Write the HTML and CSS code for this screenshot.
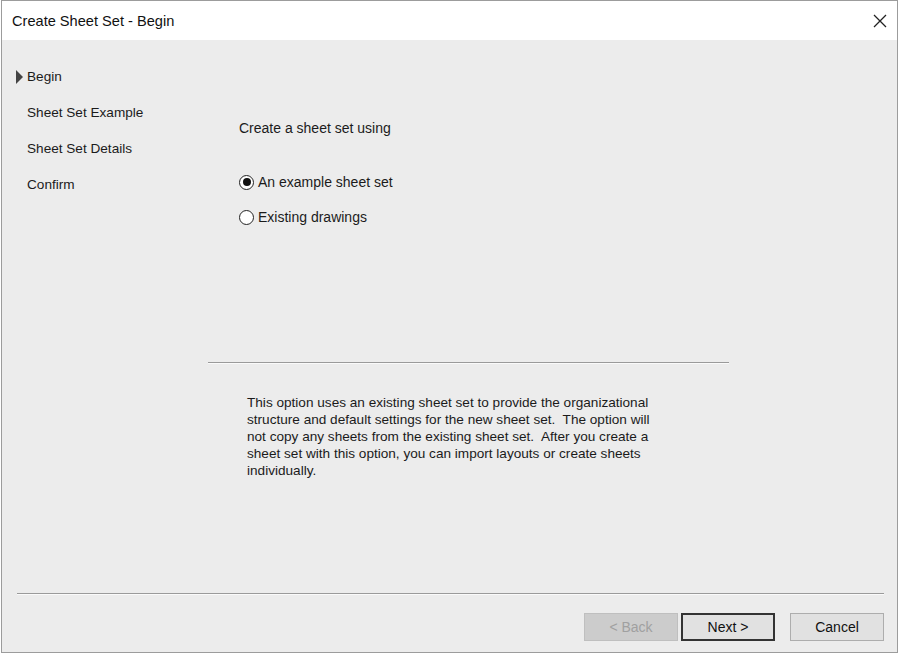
FILE: index.html
```html
<!DOCTYPE html>
<html lang="en">
<head>
  <meta charset="UTF-8">
  <title>Create Sheet Set - Begin</title>
  <link rel="stylesheet" href="styles.css">
</head>
<body>

  <div class="window">
    <!-- Title bar -->
    <div class="titlebar">
      <span class="title">Create Sheet Set - Begin</span>
      <svg class="close" width="14" height="14" viewBox="0 0 14 14">
        <path d="M1 1 L13 13 M13 1 L1 13" stroke="#222" stroke-width="1.3" fill="none"/>
      </svg>
    </div>

    <div class="content">
      <div class="wizard">
        <!-- Step list -->
        <ul class="steps">
          <li class="current"><span class="arrow"></span>Begin</li>
          <li>Sheet Set Example</li>
          <li>Sheet Set Details</li>
          <li>Confirm</li>
        </ul>

        <!-- Page body -->
        <div class="page">
          <div class="options">
            <p class="prompt">Create a sheet set using</p>
            <label class="radio"><span class="dot checked"></span>An example sheet set</label>
            <label class="radio"><span class="dot"></span>Existing drawings</label>
          </div>
          <div class="rule"></div>
          <p class="desc">
            This option uses an existing sheet set to provide the organizational<br>
            structure and default settings for the new sheet set.&nbsp; The option will<br>
            not copy any sheets from the existing sheet set.&nbsp; After you create a<br>
            sheet set with this option, you can import layouts or create sheets<br>
            individually.
          </p>
        </div>
      </div>

      <div class="footer">
        <div class="rule wide"></div>
        <div class="buttons">
          <button class="btn" disabled>&lt; Back</button>
          <button class="btn default">Next &gt;</button>
          <button class="btn cancel">Cancel</button>
        </div>
      </div>
    </div>
  </div>

</body>
</html>
```

FILE: styles.css
```css
body {
  margin: 0;
  background: #fff;
  font-family: "Liberation Sans", Arial, sans-serif;
  color: #1b1b1b;
}
.window {
  margin-left: 1px;
  width: 897px;
  height: 653px;
  box-sizing: border-box;
  border: 1px solid #9c9c9c;
  display: flex;
  flex-direction: column;
}
.titlebar {
  height: 39px;
  background: #fff;
  display: flex;
  align-items: center;
  justify-content: space-between;
  padding: 0 10px 0 10px;
}
.title {
  font-size: 14.6px;
  color: #111;
}
.content {
  flex: 1;
  background: #ececec;
  display: flex;
  flex-direction: column;
}
.wizard {
  flex: 1;
  display: flex;
}
.steps {
  list-style: none;
  margin: 0;
  padding: 19px 0 0 25px;
  width: 181px;
  font-size: 13.6px;
}
.steps li {
  height: 36px;
  line-height: 36px;
  position: relative;
}
.arrow {
  position: absolute;
  left: -11px;
  top: 11px;
  width: 0;
  height: 0;
  border-top: 7px solid transparent;
  border-bottom: 7px solid transparent;
  border-left: 7px solid #444;
}
.page {
  width: 521px;
}
.options {
  padding: 78px 0 0 31px;
  height: 244px;
  font-size: 14px;
}
.prompt {
  margin: 0 0 34px;
  line-height: 20px;
}
.radio {
  display: flex;
  align-items: center;
  height: 20px;
  margin-bottom: 15px;
}
.dot {
  width: 13px;
  height: 13px;
  border: 1.5px solid #222;
  border-radius: 50%;
  margin-right: 4px;
  display: flex;
  align-items: center;
  justify-content: center;
  background: #fff;
}
.dot.checked::after {
  content: "";
  width: 8px;
  height: 8px;
  border-radius: 50%;
  background: #111;
}
.rule {
  border-top: 1px solid #9a9a9a;
  border-bottom: 1px solid #fafafa;
}
.desc {
  margin: 30px 0 0 39px;
  font-size: 13.6px;
  line-height: 17px;
  white-space: nowrap;
}
.footer {
  padding: 0 13px 11px 15px;
}
.rule.wide {
  margin-bottom: 18px;
}
.buttons {
  display: flex;
  justify-content: flex-end;
  gap: 3px;
}
.btn {
  width: 94px;
  height: 28px;
  font-family: inherit;
  font-size: 14px;
  background: #e1e1e1;
  border: 1px solid #adadad;
  color: #111;
  padding: 0;
}
.btn:disabled {
  background: #cccccc;
  border-color: #bfbfbf;
  color: #a0a0a0;
}
.btn.default {
  border: 2px solid #333;
}
.btn.cancel {
  margin-left: 12px;
}
```
